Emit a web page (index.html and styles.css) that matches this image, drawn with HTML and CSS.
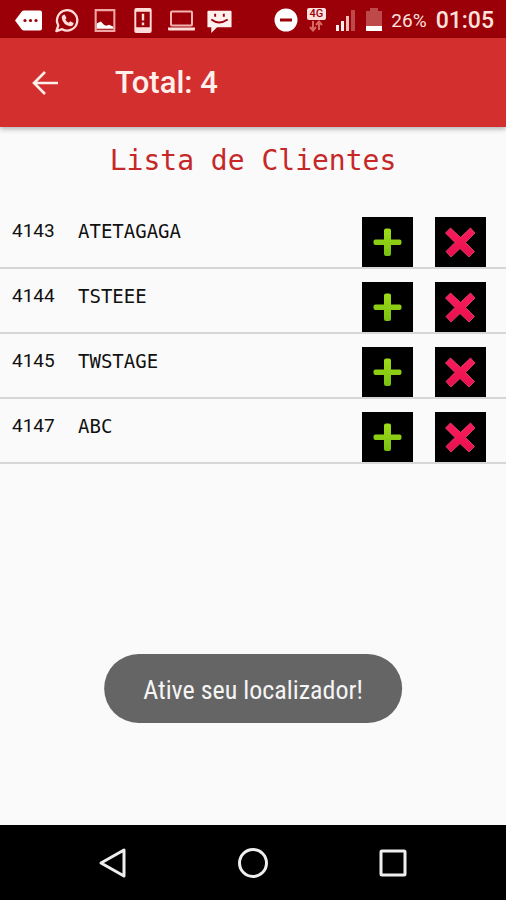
FILE: index.html
```html
<!DOCTYPE html>
<html lang="pt-BR">
<head>
<meta charset="utf-8">
<meta name="viewport" content="width=device-width, initial-scale=1">
<title>Lista de Clientes</title>
<link rel="stylesheet" href="styles.css">
</head>
<body>
<svg class="defs" aria-hidden="true">
  <defs>
    <linearGradient id="green" x1="0" y1="0" x2="0" y2="1"><stop offset="0" stop-color="#a0dc18"/><stop offset="1" stop-color="#78c010"/></linearGradient>
    <linearGradient id="pink" x1="0" y1="0" x2="0" y2="1"><stop offset="0" stop-color="#fa1c5c"/><stop offset="1" stop-color="#e8104e"/></linearGradient>
    <symbol id="plus" viewBox="0 0 50 50"><path d="M23.500 11.500h3q2 0 2 2v9h8.500q2 0 2 2v1.500q0 2-2 2h-8.500v9q0 2-2 2h-3q-2 0-2-2v-9H13q-2 0-2-2v-1.500q0-2 2-2h8.500v-9q0-2 2-2z" fill="url(#green)"/></symbol>
    <symbol id="cross" viewBox="0 0 50 50"><path d="M15 11l10 9.500 10-9.500 4.500 5-9.500 9.500 9 9-5.500 5.500-9-8.500-9 8.500-5-5.500 9-9-9.500-9.500z" fill="url(#pink)" stroke="#d83a64" stroke-width="1" stroke-linejoin="round"/></symbol>
  </defs>
</svg>
<div class="status">
  <div class="group notices">
    <svg viewBox="0 0 28 26"><path d="M9 3h16q2 0 2 2v16q0 2-2 2H9q-2 0-3-2L0 13l6-8q1-2 3-2z" fill="#fff"/><g fill="#9b0008"><circle cx="10" cy="13" r="1.600"/><circle cx="15.500" cy="13" r="1.600"/><circle cx="21" cy="13" r="1.600"/></g></svg>
    <svg viewBox="0 0 26 28"><path d="M2 25l2-6A10.500 10.500 0 1 1 8 23z" fill="none" stroke="#ffdcd8" stroke-width="2.400" stroke-linejoin="round"/><path d="M8.500 8.500l2-.8 2 3.800-1.200 1.500q1 2.400 3.500 3.400l1.600-1.500 3.400 1.800q0 3-3.300 3.300Q9 19 7.500 11.500q0-2 1-3z" fill="#ffdcd8"/></svg>
    <svg viewBox="0 0 22 26"><path d="M2 3h18v20H2z" fill="none" stroke="#f0a6a4" stroke-width="2"/><path d="M3 21v-5l4-2 3 3 2 1 3-1 4 2v2z" fill="#fff"/></svg>
    <svg viewBox="0 0 20 28"><path d="M3 1h14q2 0 2 2v22q0 2-2 2H3q-2 0-2-2V3q0-2 2-2zm0 4v16h14V5z" fill="#ffdcd8" fill-rule="evenodd"/><path d="M10 7v7m0 2v3" stroke="#ffdcd8" stroke-width="2.500"/></svg>
    <svg viewBox="0 0 28 26"><rect x="4" y="4" width="21" height="14" rx="1" fill="none" stroke="#f4b4b0" stroke-width="2"/><path d="M1 20h27v2q0 1-1 1H2q-1 0-1-1z" fill="#ffdcd8"/></svg>
    <svg viewBox="0 0 26 28"><path d="M2 4h23q1 0 1 1v16H11l-6 6v-6H1V5q0-1 1-1z" fill="#fff0ee"/><path d="M5 13q8 6 17 0" fill="none" stroke="#9b0008" stroke-width="2"/><path d="M8 7h2v3H8zm9 0h2v3h-2z" fill="#9b0008"/></svg>
  </div>
  <div class="group system">
    <svg width="24" height="24" viewBox="0 0 24 24"><circle cx="12" cy="12" r="11.500" fill="#fff"/><path d="M6 12h12" stroke="#9b0008" stroke-width="3"/></svg>
    <span class="network"><span class="net-label">4G</span><svg width="14" height="12" viewBox="0 0 14 12"><path d="M4 1v9M1 7l3 3.500L7 7M10 10V2M7 5l3-3.500L13 5" fill="none" stroke="#d96865" stroke-width="2"/></svg></span>
    <svg width="22" height="24" viewBox="0 0 22 24"><g fill="#fff0ee"><path d="M1 17h3v6H1z"/><path d="M6 13h3v10H6z"/></g><path d="M11 8h3v15h-3z" fill="#f6bcb8"/><path d="M16 2h4v21h-4z" fill="#bd4a49"/></svg>
    <svg width="16" height="24" viewBox="0 0 16 24"><path d="M0 3h4V0h8v3h4v15H0z" fill="#bd4a49"/><path d="M0 18h16v5H0z" fill="#fff"/></svg>
    <span class="percent">26%</span>
    <span class="clock">01:05</span>
  </div>
</div>
<header class="appbar">
  <button class="back" type="button" aria-label="Voltar"><svg width="28" height="28" viewBox="0 0 28 28"><path d="M27 14H3M14 3L3 14l11 11" fill="none" stroke="#fff0ec" stroke-width="2.600"/></svg></button>
  <span class="total">Total: 4</span>
</header>
<main class="content">
  <h1 class="title">Lista de Clientes</h1>
  <table class="clients">
    <tbody>
      <tr><td class="code">4143</td><td class="name">ATETAGAGA</td><td class="actions"><div class="buttons"><button type="button" aria-label="Adicionar"><svg><use href="#plus"/></svg></button><button type="button" aria-label="Excluir"><svg><use href="#cross"/></svg></button></div></td></tr>
      <tr><td class="code">4144</td><td class="name">TSTEEE</td><td class="actions"><div class="buttons"><button type="button" aria-label="Adicionar"><svg><use href="#plus"/></svg></button><button type="button" aria-label="Excluir"><svg><use href="#cross"/></svg></button></div></td></tr>
      <tr><td class="code">4145</td><td class="name">TWSTAGE</td><td class="actions"><div class="buttons"><button type="button" aria-label="Adicionar"><svg><use href="#plus"/></svg></button><button type="button" aria-label="Excluir"><svg><use href="#cross"/></svg></button></div></td></tr>
      <tr><td class="code">4147</td><td class="name">ABC</td><td class="actions"><div class="buttons"><button type="button" aria-label="Adicionar"><svg><use href="#plus"/></svg></button><button type="button" aria-label="Excluir"><svg><use href="#cross"/></svg></button></div></td></tr>
    </tbody>
  </table>
  <div class="toast" role="status">Ative seu localizador!</div>
</main>
<nav class="navbar">
  <button type="button" aria-label="Voltar"><svg width="32" height="32" viewBox="0 0 32 32"><path d="M27 3v26L4 16z"/></svg></button>
  <button type="button" aria-label="Início"><svg width="32" height="32" viewBox="0 0 32 32"><circle cx="16" cy="16" r="13.500"/></svg></button>
  <button type="button" aria-label="Recentes"><svg width="32" height="32" viewBox="0 0 32 32"><rect x="4" y="4" width="24" height="24" rx="1"/></svg></button>
</nav>
</body>
</html>
```
FILE: styles.css
```css
* {
  box-sizing: border-box;
}

body {
  margin: 0;
  min-height: 100vh;
  display: flex;
  flex-direction: column;
  background: #fafafa;
  font-family: Roboto, sans-serif;
}

button {
  padding: 0;
  border: 0;
  background: none;
}

svg {
  display: block;
}

.defs {
  position: absolute;
  width: 0;
  height: 0;
}

.status {
  height: 38px;
  padding: 2px 12px 0 15px;
  display: flex;
  align-items: center;
  justify-content: space-between;
  background: #9b0008;
  color: #ffe2de;
}

.group {
  display: flex;
  align-items: center;
}

.notices {
  gap: 10px;
}

.notices svg {
  width: 28px;
  height: 27px;
}

.system {
  gap: 9px;
}

.network {
  display: flex;
  flex-direction: column;
  align-items: center;
}

.net-label {
  padding: 0 3px;
  border-radius: 2px;
  background: #ffe2de;
  color: #9b0008;
  font-size: 11px;
  line-height: 12px;
  font-weight: 500;
}

.percent {
  font-size: 19px;
}

.clock {
  font-size: 23px;
  font-weight: 500;
}

.appbar {
  height: 89px;
  padding-left: 31px;
  display: flex;
  align-items: center;
  gap: 56px;
  background: #d32f2f;
  box-shadow: 0 2px 5px rgba(0, 0, 0, 0.3);
  z-index: 1;
}

.total {
  color: #fff0ec;
  font-size: 31px;
  font-weight: 500;
}

.content {
  flex: 1;
  position: relative;
}

.title {
  margin: 14px 0 23px;
  color: #c62828;
  font: 28px/40px "DejaVu Sans Mono", monospace;
  text-align: center;
}

.clients {
  width: 100%;
  border-collapse: separate;
  border-spacing: 0;
  table-layout: fixed;
  color: #111;
}

.clients td {
  height: 65px;
  padding: 0;
  border-bottom: 2px solid #d6d6d6;
  vertical-align: top;
}

.clients .code {
  width: 78px;
  padding: 15px 0 0 12px;
  font-size: 19px;
  line-height: 24px;
}

.clients .name {
  padding-top: 15px;
  font: 19px/24px "DejaVu Sans Mono", monospace;
}

.clients .actions {
  width: 144px;
}

.buttons {
  height: 63px;
  display: flex;
  align-items: flex-end;
  gap: 22px;
}

.buttons button {
  width: 51px;
  height: 50px;
  background: #000;
}

.buttons svg {
  width: 51px;
  height: 50px;
}

.toast {
  position: absolute;
  bottom: 102px;
  left: 50%;
  transform: translateX(-50%);
  padding: 20px 39px 17px;
  border-radius: 35px;
  background: #656565;
  color: #f5f5f5;
  font: 26px/32px "Roboto Condensed", Roboto, sans-serif;
  white-space: nowrap;
}

.navbar {
  height: 75px;
  padding: 0 43px;
  display: flex;
  align-items: center;
  background: #000;
}

.navbar button {
  flex: 1;
  display: flex;
  justify-content: center;
}

.navbar svg {
  fill: none;
  stroke: #eee;
  stroke-width: 3;
  stroke-linejoin: round;
}
```
